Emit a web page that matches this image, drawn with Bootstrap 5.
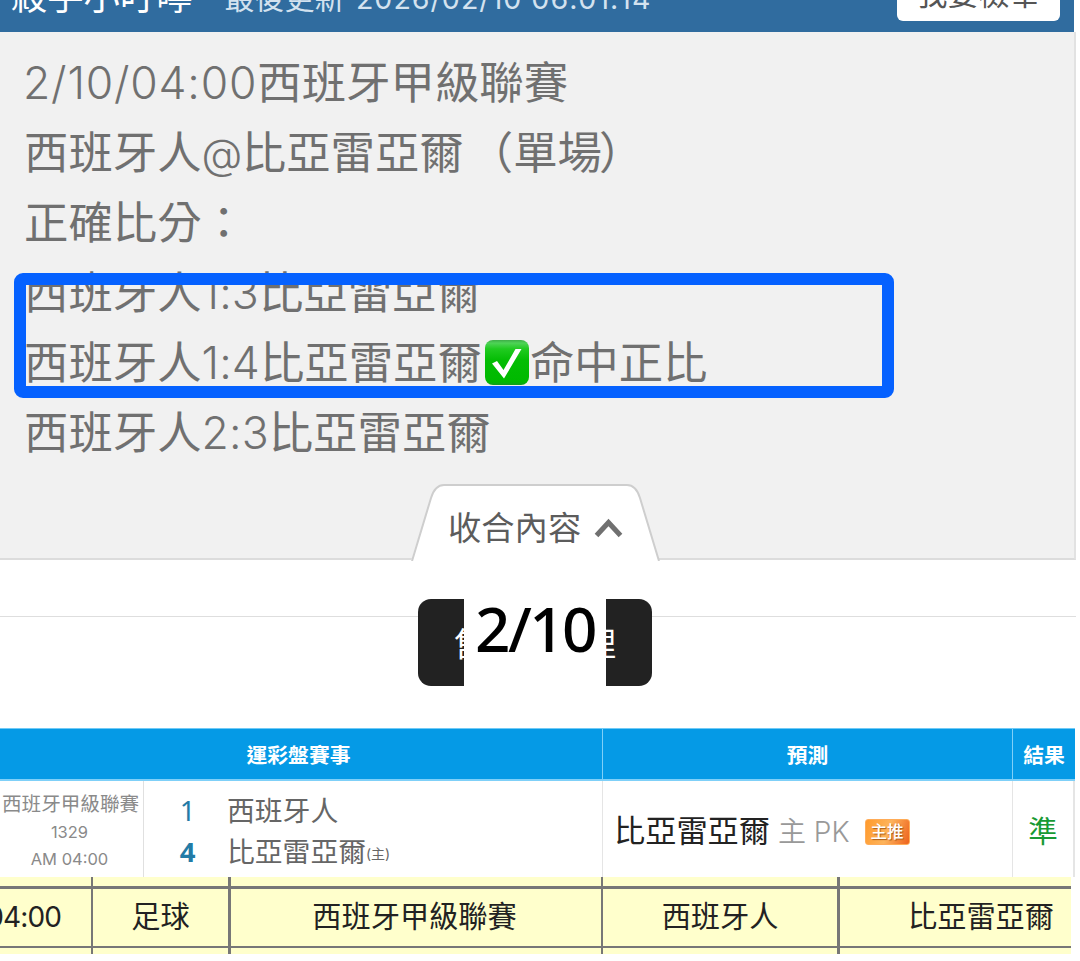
<!DOCTYPE html>
<html lang="zh-Hant">
<head>
    <meta charset="UTF-8">
    <meta name="viewport" content="width=device-width, initial-scale=1.0">
    <title>殺手小叮嚀</title>
    <link href="https://cdn.jsdelivr.net/npm/bootstrap@5.3.0/dist/css/bootstrap.min.css" rel="stylesheet">
    <style>
        body{
            font-family: Inter, "Noto Sans CJK TC", sans-serif;
            color: #707070;
            width: 1080px;
            height: 961px;
        }
        .killer-bar{
            background-color: #306c9f;
            width: 1074px;
            height: 32px;
            padding-left: 11px;
            padding-right: 14px;
        }
        .killer-title{
            font-size: 36.3px;
            line-height: 44px;
            height: 57px;
            color: #fff;
        }
        .killer-time{
            font-size: 30px;
            line-height: 44px;
            height: 56px;
            margin-left: 32px;
            color: #d3e2ef;
        }
        .killer-time span{
            font-size: 28.6px;
            letter-spacing: 1px;
            margin-left: 3px;
        }
        .report-btn{
            width: 163px;
            height: 60px;
            margin-bottom: 11px;
            border-radius: 6px;
            font-size: 31px;
            line-height: 62px;
            padding: 2px 0 0;
            color: #555;
        }
        .note-panel{
            width: 1076px;
            height: 528px;
            padding-top: 16px;
            background-color: #f1f1f1;
            border-right: 2px solid #e2e2e2;
            border-bottom: 2px solid #dcdcdc;
        }
        .note-lines{
            padding-left: 24px;
            font-size: 44.4px;
            line-height: 70px;
            height: 436px;
        }
        .note-lines > div{
            height: 70px;
        }
        .digits{
            font-size: 44.5px;
            font-weight: 350;
            letter-spacing: .1px;
        }
        .first-line .digits{
            letter-spacing: .8px;
        }
        .at-sign{
            font-size: 42px;
            font-weight: 350;
            letter-spacing: -.6px;
        }
        .first-line{
            margin-left: -1px;
        }
        .single-game{
            margin-left: 5px;
        }
        .paren-end{
            margin-left: -3px;
        }
        .check-icon{
            width: 45px;
            height: 45px;
            margin: -2px 0 0 3px;
        }
        .hit-frame{
            left: 14px;
            top: 241px;
            width: 880px;
            height: 125px;
            border: 12px solid #0561ff;
            border-radius: 9px;
        }
        .fold-tab{
            width: 250px;
            height: 77px;
            margin-left: 410px;
        }
        .fold-text{
            font-size: 33.3px;
            line-height: 88px;
            color: #5c5c5c;
            padding-left: 38px;
        }
        .sale-area{
            height: 168px;
            padding-top: 39px;
        }
        .sale-line{
            top: 56px;
            width: 1076px;
            height: 1px;
            background-color: #dedede;
        }
        .sale-btn{
            width: 234px;
            height: 87px;
            margin-left: 418px;
            padding: 4px 36px 0;
            border-radius: 13px;
            background-color: #222;
            color: #fff;
            font-size: 33px;
        }
        .date-cover{
            left: 46px;
            top: 0;
            width: 142px;
            height: 87px;
            background-color: #fff;
            color: #000;
            font-family: "Noto Sans", sans-serif;
            font-size: 62px;
            font-weight: 500;
            line-height: 59px;
            letter-spacing: -2.6px;
        }
        .bet-head{
            height: 53px;
            background-color: #059ae6;
            border-top: 1px solid #6fcaf6;
            border-bottom: 2px solid #7fd0f8;
            width: 1075px;
            color: #fff;
            font-size: 20.8px;
            font-weight: 700;
        }
        .bet-head > div{
            padding-top: 3px;
        }
        .bet-head .w-event{
            padding-right: 5px;
        }
        .bet-row{
            height: 96px;
            width: 1076px;
        }
        .w-event{
            width: 602px;
        }
        .w-pick{
            width: 411px;
        }
        .w-result{
            width: 62px;
        }
        .bet-head .w-pick{
            border-left: 1px solid #7fd0f8;
            border-right: 1px solid #7fd0f8;
        }
        .bet-row .w-pick{
            border-left: 1px solid #e5e5e5;
            border-right: 1px solid #e5e5e5;
            padding-left: 11px;
            padding-top: 5px;
        }
        .bet-row .w-result{
            border-right: 2px solid #e5e5e5;
            padding-top: 5px;
            font-size: 29.5px;
            color: #189a34;
        }
        .league-cell{
            width: 144px;
            border-right: 1px solid #e0e0e0;
            padding: 10px 4px 0 0;
            font-size: 16.5px;
            line-height: 27px;
            color: #8a8a8a;
        }
        .league-cell > div:nth-child(2){
            padding-top: 1px;
        }
        .league-cell > div:nth-child(3){
            line-height: 26px;
        }
        .league-name{
            font-size: 19.6px;
            margin-left: 2px;
        }
        .score-cell{
            width: 83px;
            padding: 9px 0 0 4px;
            color: #237ba6;
            font-family: "Noto Sans", sans-serif;
            font-size: 27.5px;
            line-height: 41px;
        }
        .team-cell{
            padding-top: 10px;
            font-size: 27.8px;
            line-height: 41px;
            color: #666;
        }
        .team-cell small{
            font-size: 14px;
            display: inline-block;
            vertical-align: 3px;
            line-height: 1;
        }
        .pick-name{
            font-size: 31.2px;
            color: #222;
        }
        .pick-kind{
            font-size: 28px;
            font-weight: 350;
            color: #999;
            margin-left: 8px;
        }
        .push-tag{
            width: 45px;
            height: 26px;
            margin-left: 15px;
            border-radius: 3px;
            background: linear-gradient(110deg, #ff9a2c, #fdb45c 50%, #ee621d);
            border: 1px solid #ffac58;
            color: #fff;
            font-size: 16.5px;
            font-weight: 500;
            line-height: 24px;
            text-shadow: 1px 1px 1px #a75b18;
        }
        .sheet{
            width: 1071px;
            height: 77px;
            background-color: #ffffcc;
            color: #222;
            font-size: 29.2px;
            grid-template-columns: 91px 137px 373px 236px 234px;
            grid-template-rows: 9px 62px 6px;
        }
        .sheet > div{
            border-left: 2px solid #777;
            overflow: hidden;
            white-space: nowrap;
            line-height: 56px;
        }
        .sheet > div:nth-child(5n+1){
            border-left: 0;
        }
        .sheet > div:nth-child(5n+3),
        .sheet > div:nth-child(5n){
            border-left-width: 3px;
        }
        .sheet > .sheet-main{
            border-top: 3px solid #777;
            border-bottom: 2px solid #777;
        }
        .sheet > .sheet-time{
            font-size: 28px;
            letter-spacing: -.9px;
            padding-right: 30px;
        }
        .sheet > .sheet-away{
            padding-right: 17px;
        }
        .sheet > .sheet-league{
            padding-right: 3px;
        }
    </style>
</head>
<body class="bg-white overflow-hidden">
    <header class="killer-bar d-flex align-items-end overflow-hidden">
        <div class="killer-title">殺手小叮嚀</div>
        <div class="killer-time">最後更新 <span>2026/02/10 06:01:14</span></div>
        <button class="btn btn-light bg-white border-0 report-btn ms-auto">我要檢舉</button>
    </header>

    <section class="note-panel position-relative">
        <div class="note-lines text-nowrap">
            <div class="first-line"><span class="digits">2/10/04:00</span>西班牙甲級聯賽</div>
            <div>西班牙人<span class="at-sign">@</span>比亞雷亞爾<span class="single-game">（單場<span class="paren-end">）</span></span></div>
            <div>正確比分：</div>
            <div>西班牙人<span class="digits">1:3</span>比亞雷亞爾</div>
            <div class="d-flex align-items-center">西班牙人<span class="digits">1:4</span>比亞雷亞爾<svg class="check-icon flex-shrink-0" viewBox="0 0 45 45">
                <defs>
                    <linearGradient id="green" x1="0" y1="0" x2="0" y2="1">
                        <stop offset="0" stop-color="#3fae48"/>
                        <stop offset=".07" stop-color="#4ed356"/>
                        <stop offset=".2" stop-color="#20ca20"/>
                        <stop offset=".45" stop-color="#04bd04"/>
                        <stop offset=".93" stop-color="#00b900"/>
                        <stop offset="1" stop-color="#119d20"/>
                    </linearGradient>
                </defs>
                <rect width="44" height="45" rx="8" fill="url(#green)"/>
                <path d="M7 23.500 12 21 18.500 30 30.500 9H36.500L19 38.500Z" fill="#fff"/>
            </svg>命中正比</div>
            <div>西班牙人<span class="digits">2:3</span>比亞雷亞爾</div>
        </div>
        <div class="hit-frame position-absolute"></div>
        <div class="fold-tab position-relative">
            <svg class="position-absolute top-0 start-0" width="250" height="77" viewBox="0 0 250 77">
                <path d="M1 77 21 14Q25 1 34 1H217Q226 1 230 14L249 77Z" fill="#fff"/>
                <path d="M2 77 21 14Q25 1 34 1H217Q226 1 230 14L249 77" fill="none" stroke="#cecece" stroke-width="2"/>
                <path d="M186.500 51.500 198.500 38.500 210.500 51.500" fill="none" stroke="#707070" stroke-width="5"/>
            </svg>
            <div class="fold-text position-relative">收合內容</div>
        </div>
    </section>

    <section class="sale-area position-relative">
        <div class="sale-line position-absolute"></div>
        <div class="sale-btn position-relative d-flex align-items-center justify-content-between">
            <span>售</span><span>理</span>
            <div class="date-cover position-absolute text-center">2/10</div>
        </div>
    </section>

    <section class="bet-table">
        <div class="bet-head d-flex text-center align-items-stretch">
            <div class="w-event d-flex align-items-center justify-content-center">運彩盤賽事</div>
            <div class="w-pick d-flex align-items-center justify-content-center">預測</div>
            <div class="w-result d-flex align-items-center justify-content-center">結果</div>
        </div>
        <div class="bet-row d-flex">
            <div class="w-event d-flex">
                <div class="league-cell text-center text-nowrap">
                    <div class="league-name">西班牙甲級聯賽</div>
                    <div>1329</div>
                    <div>AM 04:00</div>
                </div>
                <div class="score-cell text-center">
                    <div>1</div>
                    <div class="fw-bold">4</div>
                </div>
                <div class="team-cell">
                    <div>西班牙人</div>
                    <div>比亞雷亞爾<small>(主)</small></div>
                </div>
            </div>
            <div class="w-pick d-flex align-items-center">
                <span class="pick-name">比亞雷亞爾</span>
                <span class="pick-kind">主 PK</span>
                <span class="push-tag text-center">主推</span>
            </div>
            <div class="w-result d-flex align-items-center justify-content-center">準</div>
        </div>
    </section>

    <section class="sheet d-grid text-center">
        <div></div><div></div><div></div><div></div><div></div>
        <div class="sheet-main sheet-time d-flex justify-content-end">04:00</div>
        <div class="sheet-main">足球</div>
        <div class="sheet-main sheet-league">西班牙甲級聯賽</div>
        <div class="sheet-main">西班牙人</div>
        <div class="sheet-main sheet-away text-end">比亞雷亞爾</div>
        <div></div><div></div><div></div><div></div><div></div>
    </section>

    <script src="https://cdn.jsdelivr.net/npm/bootstrap@5.3.0/dist/js/bootstrap.bundle.min.js"></script>
</body>
</html>
